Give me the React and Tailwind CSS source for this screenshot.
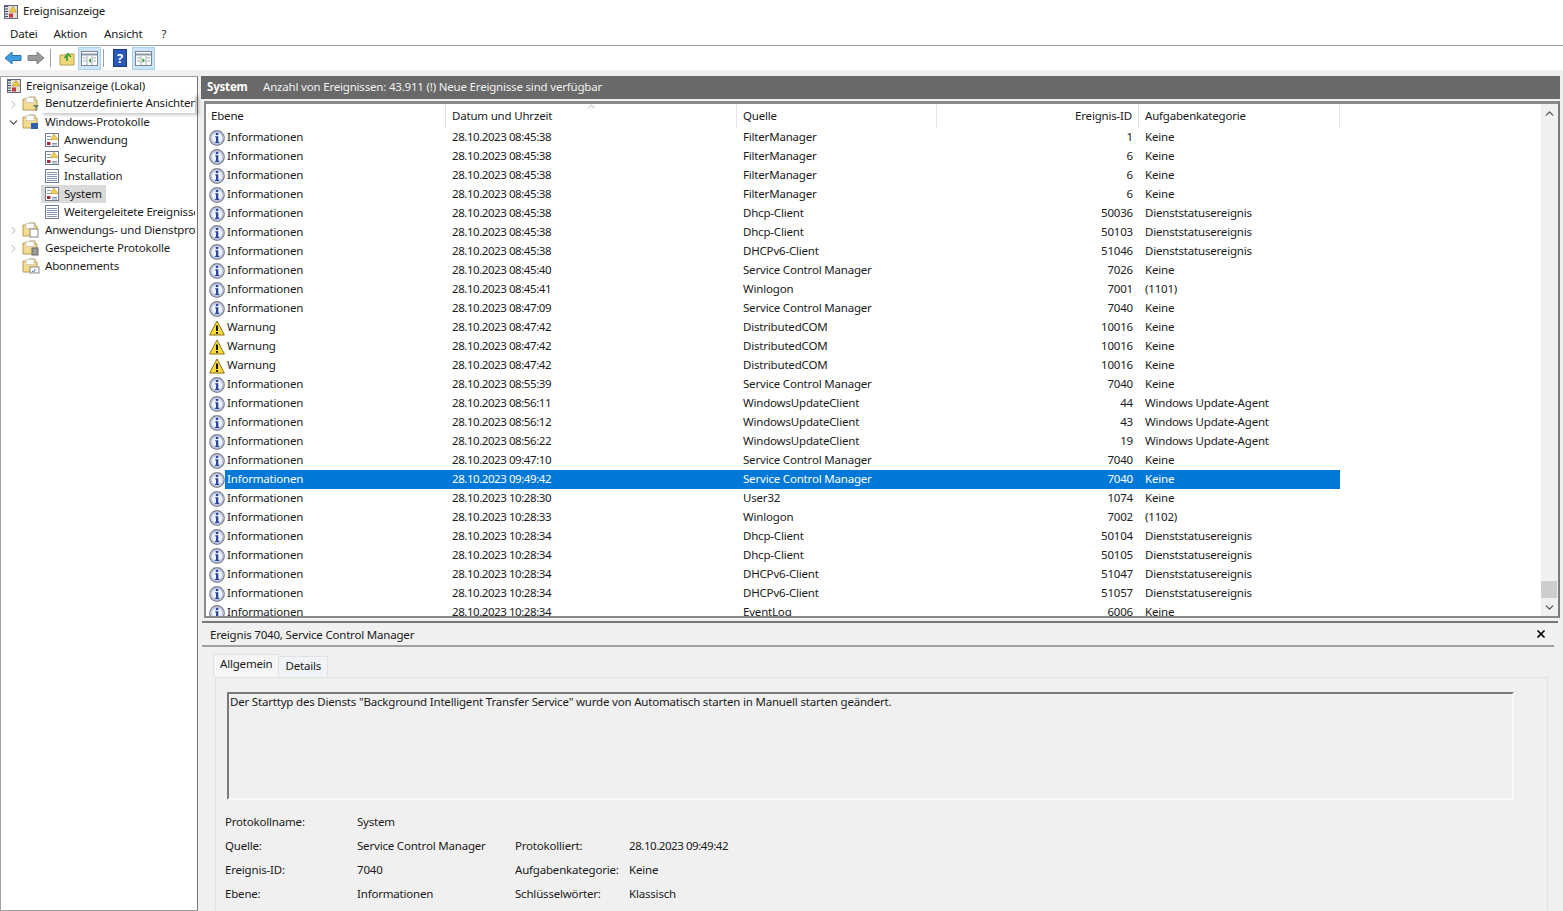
import { ChevronRight, ChevronDown, ChevronUp, X } from 'lucide-react';

const I = 'Informationen';
const W = 'Warnung';
const rows = [
  [I, '28.10.2023 08:45:38', 'FilterManager', '1', 'Keine'],
  [I, '28.10.2023 08:45:38', 'FilterManager', '6', 'Keine'],
  [I, '28.10.2023 08:45:38', 'FilterManager', '6', 'Keine'],
  [I, '28.10.2023 08:45:38', 'FilterManager', '6', 'Keine'],
  [I, '28.10.2023 08:45:38', 'Dhcp-Client', '50036', 'Dienststatusereignis'],
  [I, '28.10.2023 08:45:38', 'Dhcp-Client', '50103', 'Dienststatusereignis'],
  [I, '28.10.2023 08:45:38', 'DHCPv6-Client', '51046', 'Dienststatusereignis'],
  [I, '28.10.2023 08:45:40', 'Service Control Manager', '7026', 'Keine'],
  [I, '28.10.2023 08:45:41', 'Winlogon', '7001', '(1101)'],
  [I, '28.10.2023 08:47:09', 'Service Control Manager', '7040', 'Keine'],
  [W, '28.10.2023 08:47:42', 'DistributedCOM', '10016', 'Keine'],
  [W, '28.10.2023 08:47:42', 'DistributedCOM', '10016', 'Keine'],
  [W, '28.10.2023 08:47:42', 'DistributedCOM', '10016', 'Keine'],
  [I, '28.10.2023 08:55:39', 'Service Control Manager', '7040', 'Keine'],
  [I, '28.10.2023 08:56:11', 'WindowsUpdateClient', '44', 'Windows Update-Agent'],
  [I, '28.10.2023 08:56:12', 'WindowsUpdateClient', '43', 'Windows Update-Agent'],
  [I, '28.10.2023 08:56:22', 'WindowsUpdateClient', '19', 'Windows Update-Agent'],
  [I, '28.10.2023 09:47:10', 'Service Control Manager', '7040', 'Keine'],
  [I, '28.10.2023 09:49:42', 'Service Control Manager', '7040', 'Keine'],
  [I, '28.10.2023 10:28:30', 'User32', '1074', 'Keine'],
  [I, '28.10.2023 10:28:33', 'Winlogon', '7002', '(1102)'],
  [I, '28.10.2023 10:28:34', 'Dhcp-Client', '50104', 'Dienststatusereignis'],
  [I, '28.10.2023 10:28:34', 'Dhcp-Client', '50105', 'Dienststatusereignis'],
  [I, '28.10.2023 10:28:34', 'DHCPv6-Client', '51047', 'Dienststatusereignis'],
  [I, '28.10.2023 10:28:34', 'DHCPv6-Client', '51057', 'Dienststatusereignis'],
  [I, '28.10.2023 10:28:34', 'EventLog', '6006', 'Keine'],
];

function InfoIcon() {
  return (
    <svg width="16" height="16" viewBox="0 0 16 16" className="shrink-0">
      <circle cx="8" cy="8" r="7.2" fill="#f1f3fa" stroke="#83858f" strokeWidth="1.4" />
      <circle cx="8" cy="8" r="5.7" fill="none" stroke="#bcc6e8" strokeWidth="1.2" />
      <rect x="6.8" y="2.9" width="2.5" height="2.2" fill="#28479f" />
      <path d="M6.3 6.3h3v5.500h.9v1.100H6.100v-1.100h.9V7.400h-.7z" fill="#28479f" />
    </svg>
  );
}

function WarnIcon() {
  return (
    <svg width="16" height="16" viewBox="0 0 16 16" className="shrink-0">
      <path d="M8 1 15.400 15H.6z" fill="#fbdc36" stroke="#8a6f1e" strokeWidth="1" strokeLinejoin="round" />
      <rect x="7" y="5.500" width="2" height="5.500" fill="#111" />
      <rect x="7" y="12" width="2" height="1.800" fill="#111" />
    </svg>
  );
}

function FolderIcon({ children }) {
  return (
    <svg width="18" height="16" viewBox="0 0 18 16" className="shrink-0">
      <path d="M1 3h5l1-2h6v3h2v10H1z" fill="#f4dc8e" stroke="#b59b55" strokeWidth="1" />
      <rect x="4" y="1.500" width="8" height="5" fill="#fff" stroke="#c6c6c6" strokeWidth=".8" />
      {children}
    </svg>
  );
}

function AppIcon() {
  return (
    <svg width="16" height="16" viewBox="0 0 16 16" className="shrink-0">
      <rect x="1.500" y="1.500" width="13" height="13" fill="#e4e0d2" stroke="#5f6880" />
      <path d="M2 2.500h3M2 5h3M2 7.500h3M2 10h3M2 12.500h3" stroke="#3f4c78" strokeWidth="1.200" />
      <path d="M10 2.500 13.500 8h-7z" fill="#f3cd3b" stroke="#ab8a2a" strokeWidth=".6" />
      <rect x="6" y="9.500" width="4" height="4" fill="#c23a45" />
    </svg>
  );
}

function LogIcon({ plain }) {
  return (
    <svg width="16" height="16" viewBox="0 0 16 16" className="shrink-0">
      <rect x="1.500" y="1.500" width="13" height="13" fill="#fff" stroke="#6f7c90" />
      {plain ? (
        <path d="M3 4.500h10M3 6.500h10M3 8.500h10M3 10.500h10M3 12.500h10" stroke="#8296b4" />
      ) : (
        <>
          <path d="M3 4.500h4M3 7.500h4M8 11.500h5M8 13h5" stroke="#8296b4" />
          <path d="M10 2 14 7.500H6.500z" fill="#f2d04d" stroke="#b89632" strokeWidth=".6" />
          <rect x="3" y="10" width="3.500" height="3" fill="#a4293c" />
        </>
      )}
    </svg>
  );
}

function Chevron({ arrow }) {
  return (
    <span className="w-[18px] shrink-0 -ml-[18px] flex justify-center">
      {arrow === 'right' && <ChevronRight size={13} strokeWidth={1.600} className="text-[#a0a0a0]" />}
      {arrow === 'down' && <ChevronDown size={13} strokeWidth={2} className="text-[#444]" />}
    </span>
  );
}

function FolderRow({ arrow, icon, label, tip }) {
  return (
    <div className="flex items-center h-[18px] pl-[21px] whitespace-nowrap relative">
      <Chevron arrow={arrow} />
      {icon}
      {tip ? (
        <span className="absolute left-[38px] -top-[1px] w-[156px] h-[19px] leading-[18px] pl-[6px] bg-white overflow-hidden shadow-[4px_2px_3px_rgba(0,0,0,0.22)] z-10">{label}</span>
      ) : (
        <span className="ml-[5px] w-[151px] h-[18px] leading-[17px] overflow-hidden">{label}</span>
      )}
    </div>
  );
}

function LogRow({ icon, label, selected }) {
  return (
    <div className="flex items-center h-[18px] pl-[40px] whitespace-nowrap">
      <div className={`flex items-center h-[18px] pl-[3px] pr-[4px] ${selected ? 'bg-[#d9d9d9]' : ''}`}>
        {icon}
        <span className="ml-[4px] max-w-[131px] h-[18px] leading-[17px] overflow-hidden">{label}</span>
      </div>
    </div>
  );
}

function PaneButton({ children }) {
  return (
    <div className="w-[23px] h-[23px] bg-[#cce4f7] border border-[#a8d0f0] flex items-center justify-center">
      <svg width="17" height="15" viewBox="0 0 17 15">
        <rect x=".5" y=".5" width="16" height="14" fill="#fff" stroke="#7b8794" />
        <path d="M1 3.500h15" stroke="#8b97a5" strokeWidth="2" />
        <path d="M6 5v9M11 5v9M2 7h3M2 10h3M12 7h3M12 10h3" stroke="#a0aab5" />
        {children}
      </svg>
    </div>
  );
}

function Toolbar() {
  return (
    <div className="h-[24px] flex items-center pl-[4px] bg-white">
      <svg width="18" height="16" viewBox="0 0 18 16"><path d="M1 8 8 2v3.500h9v5H8V14z" fill="#3d9ee0" stroke="#2672b4" /></svg>
      <svg width="18" height="16" viewBox="0 0 18 16" className="ml-[5px]"><path d="M17 8 10 2v3.500H1v5h9V14z" fill="#9a9a9a" stroke="#7e7e7e" /></svg>
      <div className="w-px h-[18px] bg-[#a0a0a0] ml-[5px]" />
      <svg width="16" height="16" viewBox="0 0 16 16" className="ml-[8px]"><path d="M1 5h5l1-1h8v11H1z" fill="#f0d778" stroke="#b89c4c" /><path d="M8 11V6M5.500 8 9 4l3 3" fill="none" stroke="#2f9c3a" strokeWidth="1.600" /></svg>
      <div className="ml-[3px]">
        <PaneButton><path d="M10 7 7.500 9.500 10 12z" fill="#2f9c3a" /></PaneButton>
      </div>
      <div className="w-px h-[18px] bg-[#a0a0a0] ml-[2px]" />
      <div className="ml-[9px] w-[14px] h-[18px] bg-[#2b57b8] border border-[#1c3a85] flex items-center justify-center text-white font-bold text-[13px] leading-none">?</div>
      <div className="ml-[5px]">
        <PaneButton><path d="M7.500 7 10 9.500 7.500 12z" fill="#2f9c3a" /></PaneButton>
      </div>
    </div>
  );
}

export default function App() {
  const cols = 'grid-cols-[240px_291px_200px_202px_201px]';
  const digits = 'tracking-[-0.44px]';
  return (
    <div className="w-[1563px] h-[911px] overflow-hidden bg-[#f0f0f0] text-[11.5px] text-[#1a1a1a] font-['Noto_Sans',sans-serif] tracking-[-0.19px] flex flex-col">
      <div className="h-[23px] bg-white flex items-center pl-[3px] gap-[4px]">
        <AppIcon />
        <span className="-mt-[1px]">Ereignisanzeige</span>
      </div>
      <div className="h-[22px] pb-[1px] bg-white flex items-center pl-[10px]">
        <span className="mr-[16px]">Datei</span><span className="mr-[17px]">Aktion</span><span className="mr-[19px]">Ansicht</span><span>?</span>
      </div>
      <div className="h-px bg-[#a0a0a0]" />
      <Toolbar />
      <div className="flex-1 flex pt-[6px] min-h-0">
        {/* tree */}
        <div className="w-[198px] shrink-0 bg-white border border-[#a0a0a0] border-r-[#777]">
          <div className="flex items-center h-[18px] pl-[5px] whitespace-nowrap">
            <AppIcon />
            <span className="ml-[4px] h-[18px] leading-[17px]">Ereignisanzeige (Lokal)</span>
          </div>
          <FolderRow arrow="right" tip icon={<FolderIcon><path d="M11 9h6l-2.500 3v3h-1v-3z" fill="#6f7f6a" /></FolderIcon>} label="Benutzerdefinierte Ansichten" />
          <FolderRow arrow="down" icon={<FolderIcon><rect x="9" y="9" width="7" height="6" fill="#2d5fb3" /></FolderIcon>} label="Windows-Protokolle" />
          <LogRow icon={<LogIcon />} label="Anwendung" />
          <LogRow icon={<LogIcon />} label="Security" />
          <LogRow icon={<LogIcon plain />} label="Installation" />
          <LogRow icon={<LogIcon />} label="System" selected />
          <LogRow icon={<LogIcon plain />} label="Weitergeleitete Ereignisse" />
          <FolderRow arrow="right" icon={<FolderIcon><rect x="8" y="7" width="8" height="8" fill="#fff" stroke="#888" /></FolderIcon>} label="Anwendungs- und Dienstprotokolle" />
          <FolderRow arrow="right" icon={<FolderIcon><rect x="10" y="8" width="6" height="7" fill="#9a9a9a" stroke="#666" /></FolderIcon>} label="Gespeicherte Protokolle" />
          <FolderRow icon={<FolderIcon><rect x="8" y="9" width="9" height="6" fill="#fff" stroke="#888" /><path d="M10 13l1.500 1 2-3" stroke="#3a6fb3" fill="none" /></FolderIcon>} label="Abonnements" />
        </div>
        {/* right side */}
        <div className="ml-[3px] w-[1359px] flex flex-col min-h-0">
          <div className="h-[23px] pb-[1px] shrink-0 bg-[#696969] text-white flex items-center pl-[6px]">
            <span className="font-bold w-[56px]">System</span>
            <span className="text-[#f0f0f0]">Anzahl von Ereignissen: 43.911 (!) Neue Ereignisse sind verfügbar</span>
          </div>
          <div className="h-[2px] shrink-0 bg-[#f0f0f0]" />
          <div className="h-[517px] shrink-0 w-[1356px] ml-[3px] bg-white border-2 border-t-[3px] border-[#8a8a8a] border-r-[#7a7a7a] flex overflow-hidden">
            <div className="flex-1 min-w-0 overflow-hidden">
              <div className={`h-[24px] grid ${cols} relative`}>
                <div className="flex items-center pb-[1px] pl-[5px] border-r border-[#e5e5e5]">Ebene</div>
                <div className="flex items-center pb-[1px] pl-[6px] border-r border-[#e5e5e5]">Datum und Uhrzeit</div>
                <div className="flex items-center pb-[1px] pl-[6px] border-r border-[#e5e5e5]">Quelle</div>
                <div className="flex items-center pb-[1px] justify-end pr-[6px] border-r border-[#e5e5e5]">Ereignis-ID</div>
                <div className="flex items-center pb-[1px] pl-[6px] border-r border-[#e5e5e5]">Aufgabenkategorie</div>
                <ChevronUp size={11} strokeWidth={1.500} className="absolute left-[380px] -top-[3px] text-[#888]" />
              </div>
              {rows.map((r, i) => {
                const sel = i === 18 ? 'bg-[#0078d7] text-white' : '';
                return (
                  <div key={i} className={`h-[19px] grid ${cols} items-center whitespace-nowrap`}>
                    <div className="flex items-center h-[19px] pl-[3px]">
                      {r[0] === W ? <WarnIcon /> : <InfoIcon />}
                      <span className={`pl-[2px] flex-1 h-[19px] leading-[18px] ${sel}`}>{r[0]}</span>
                    </div>
                    <div className={`h-[19px] leading-[18px] pl-[6px] ${digits} ${sel}`}>{r[1]}</div>
                    <div className={`h-[19px] leading-[18px] pl-[6px] ${sel}`}>{r[2]}</div>
                    <div className={`h-[19px] leading-[18px] pr-[6px] text-right ${sel}`}>{r[3]}</div>
                    <div className={`h-[19px] leading-[18px] pl-[6px] ${sel}`}>{r[4]}</div>
                  </div>
                );
              })}
            </div>
            <div className="w-[17px] shrink-0 bg-[#f0f0f0] flex flex-col items-center justify-between text-[#555] relative">
              <ChevronUp size={13} strokeWidth={2.500} className="mt-[3px]" />
              <div className="absolute left-0 right-[1px] top-[477px] h-[17px] bg-[#cdcdcd]" />
              <ChevronDown size={13} strokeWidth={2.500} className="mb-[2px]" />
            </div>
          </div>
          {/* details */}
          <div className="flex-1 min-h-0 w-[1356px] ml-[1px] mt-[3px] border-t-2 border-[#777] relative">
            <div className="h-[22px] flex items-center pl-[8px] pt-[1px]">Ereignis 7040, Service Control Manager</div>
            <X size={12} strokeWidth={3.500} className="absolute right-[11px] top-[5px] text-black" />
            <div className="h-[2px] bg-[#a0a0a0] mr-[4px]" />
            <div className="flex items-end pl-[11px] mt-[7px] h-[23px]">
              <div className="h-[23px] bg-[#f5f5f5] border border-[#e2e2e2] border-b-0 px-[6px] leading-[18px]">Allgemein</div>
              <div className="h-[21px] border border-l-0 border-b-0 border-[#e2e2e2] bg-[#f0f4f8] px-[6px] leading-[17px]">Details</div>
            </div>
            <div className="mx-[13px] w-[1333px] border border-[#e2e2e2] h-[260px] pt-[14px] pl-[11px]">
              <div className="w-[1287px] h-[108px] border-2 border-[#7a7a7a] border-r-[#f8f8f8] border-b-[#f8f8f8] pl-[1px] leading-[16px]">
                Der Starttyp des Diensts "Background Intelligent Transfer Service" wurde von Automatisch starten in Manuell starten geändert.
              </div>
              <div className="mt-[10px] grid grid-cols-[132px_158px_114px_auto] justify-start auto-rows-[24px] items-center -ml-[2px]">
                <span>Protokollname:</span><span>System</span><span /><span />
                <span>Quelle:</span><span>Service Control Manager</span><span>Protokolliert:</span><span className={digits}>28.10.2023 09:49:42</span>
                <span>Ereignis-ID:</span><span>7040</span><span>Aufgabenkategorie:</span><span>Keine</span>
                <span>Ebene:</span><span>Informationen</span><span>Schlüsselwörter:</span><span>Klassisch</span>
              </div>
            </div>
          </div>
        </div>
      </div>
    </div>
  );
}
